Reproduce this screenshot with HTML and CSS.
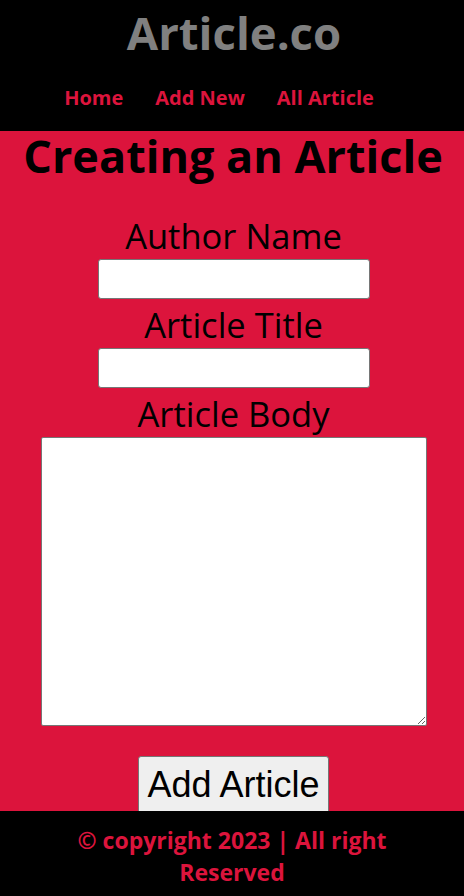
FILE: index.html
```html
<!DOCTYPE html>
<html lang="en">
<head>
<meta charset="utf-8">
<title>Article.co</title>
<link rel="stylesheet" href="styles.css">
</head>
<body>
<header class="site-header">
  <h1 class="logo">Article.co</h1>
  <nav class="nav">
    <a class="nav-link" href="#">Home</a>
    <a class="nav-link" href="#">Add New</a>
    <a class="nav-link" href="#">All Article</a>
  </nav>
</header>
<main class="main">
  <h2 class="page-title">Creating an Article</h2>
  <form class="form">
    <label class="label" for="author">Author Name</label>
    <input class="input" id="author" type="text">
    <label class="label" for="title">Article Title</label>
    <input class="input" id="title" type="text">
    <label class="label" for="body">Article Body</label>
    <textarea class="textarea" id="body"></textarea>
    <button class="btn" type="button">Add Article</button>
  </form>
</main>
<footer class="footer">
  <p class="footer-text">© copyright 2023 | All right Reserved</p>
</footer>
</body>
</html>
```

FILE: styles.css
```css
* { box-sizing: border-box; }
html, body {
  margin: 0;
  padding: 0;
}
body {
  font-family: "Open Sans", "Noto Sans", sans-serif;
  background: #dc143c;
  min-height: 100vh;
}
.site-header {
  background: #000;
  height: 131px;
  display: flex;
  flex-direction: column;
  align-items: center;
}
.logo {
  margin: 0;
  font-size: 45.5px;
  line-height: 64px;
  font-weight: 700;
  color: #808080;
  padding-left: 4px;
}
.nav {
  margin-top: 20px;
  display: flex;
  gap: 32px;
  padding-right: 26px;
}
.nav-link {
  color: #dc143c;
  font-weight: 700;
  font-size: 20px;
  line-height: 28px;
  text-decoration: none;
}
.main {
  display: flex;
  flex-direction: column;
  align-items: center;
}
.page-title {
  margin: 0;
  font-size: 45px;
  line-height: 50px;
  font-weight: 700;
  color: #000;
  text-align: center;
  padding-left: 2px;
}
.form {
  margin-top: 29px;
  padding-left: 3px;
  display: flex;
  flex-direction: column;
  align-items: center;
}
.label {
  margin-top: 3px;
  font-size: 34.5px;
  line-height: 46px;
  color: #000;
}
.input {
  width: 272px;
  height: 40px;
  background: #fff;
  border: 1px solid #767676;
  border-radius: 3px;
  font: inherit;
  font-size: 16px;
}
.textarea {
  width: 386px;
  height: 289px;
  background: #fff;
  border: 1px solid #767676;
  border-radius: 2px;
  resize: both;
}
.btn {
  margin-top: 30px;
  font-family: "Liberation Sans", Arial, sans-serif;
  font-size: 36px;
  padding: 7px 8.5px;
  background: #efefef;
  border: 1px solid #767676;
  border-radius: 3px;
  color: #000;
}
.footer {
  position: fixed;
  left: 0;
  right: 0;
  bottom: 0;
  height: 85px;
  background: #000;
  padding: 13px 40px 0;
}
.footer-text {
  margin: 0;
  text-align: center;
  color: #dc143c;
  font-weight: 700;
  font-size: 23px;
  line-height: 32px;
}
```
